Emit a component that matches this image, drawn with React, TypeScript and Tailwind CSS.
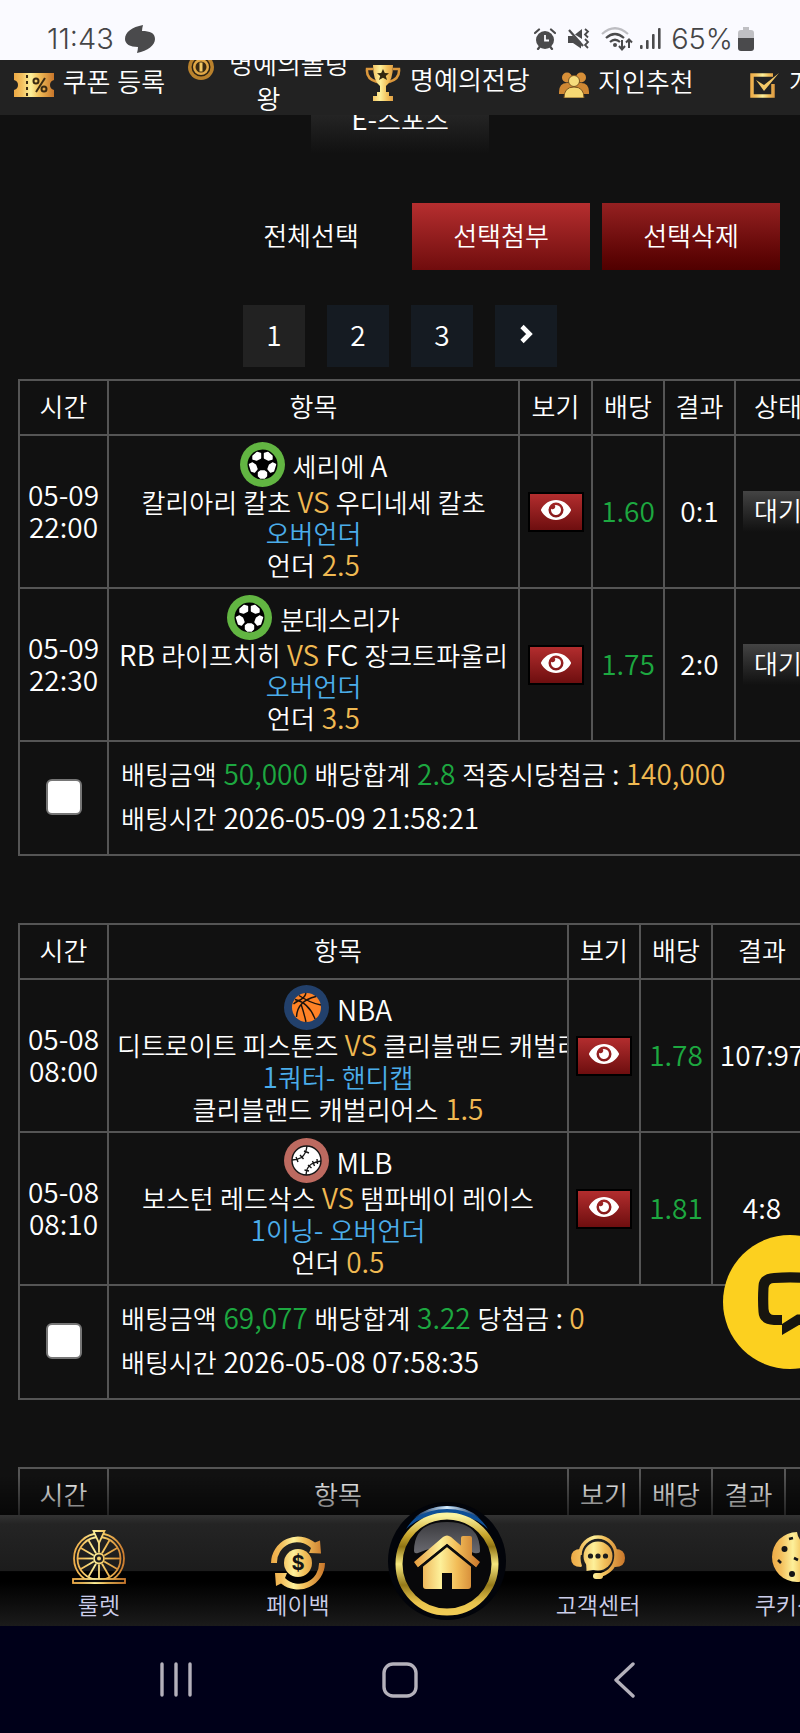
import type { ReactNode } from "react";
import { FaEye } from "react-icons/fa";

function Gold({ id, w }: { id: string; w: number }) {
  return (
    <defs>
      <linearGradient id={id} gradientUnits="userSpaceOnUse" x1="0" y1="0" x2={w} y2="0">
        <stop offset="0" stopColor="#eda945" />
        <stop offset="0.2" stopColor="#f3c05e" />
        <stop offset="0.42" stopColor="#fdf09a" />
        <stop offset="0.62" stopColor="#f2c05a" />
        <stop offset="1" stopColor="#c8752a" />
      </linearGradient>
    </defs>
  );
}

/* Latin letters and digits are set a step larger than the Hangul around them. */
function Mixed({ children }: { children: string }) {
  return (
    <>
      {children.split(/([\x20-\x7e]+)/).map((part, i) =>
        i % 2 === 1 ? (
          <span key={i} className="font-['Noto_Sans_CJK_KR',sans-serif] text-[28px] leading-none">{part}</span>
        ) : (
          part
        ),
      )}
    </>
  );
}

/* ---------- status bar ---------- */

function StatusBar() {
  return (
    <header className="flex h-[60px] shrink-0 items-center justify-between bg-[#fafaff] pt-[18px] pr-[46px] pl-[47px] font-['Inter',sans-serif] text-[29px] font-light text-[#454547]">
      <div className="flex items-center gap-[11px]">
        <span>11:43</span>
        <svg width="30" height="28" viewBox="0 0 30 28" fill="#4a4a4c" aria-hidden="true">
          <path d="M18 0 C7 2 0 7 0 14 C0 19 5 22 13 22 C13 24 12.500 26 12 28 C23 26 30 20 30 14 C30 8 25 6 17 6 C17 4 17.500 2 18 0 Z" />
        </svg>
      </div>
      <div className="flex items-center">
        <svg width="22" height="22" viewBox="0 0 22 22" aria-hidden="true">
          <circle cx="11" cy="12" r="9" fill="#4a4a4c" />
          <path d="M1 5 L5 1.500 M21 5 L17 1.500 M4 21 L6 18.500 M18 21 L16 18.500" stroke="#4a4a4c" strokeWidth="2.200" strokeLinecap="round" />
          <path d="M11 7 V12.500 H15" stroke="#fafaff" strokeWidth="1.800" fill="none" />
        </svg>
        <svg width="24" height="22" viewBox="0 0 24 22" className="ml-[11px]" aria-hidden="true">
          <path d="M1 8 H6 L14 14 V20.500 L6 15 H1 Z M8 6.500 L15 1 V11 Z" fill="#4a4a4c" />
          <path d="M2 2 L16 18" stroke="#4a4a4c" strokeWidth="2.200" />
          <path d="M18 1 l3 2.500 l-3 3 l3 3 M18 11 l3 3 l-3 3 l3 3" stroke="#4a4a4c" strokeWidth="1.800" fill="none" />
        </svg>
        <svg width="32" height="26" viewBox="0 0 32 26" className="ml-[10px]" fill="none" aria-hidden="true">
          <path d="M1 8 Q14 -3.500 27 8" stroke="#bdbdc2" strokeWidth="2.200" />
          <path d="M5 12 Q14 4 23 12 M9 16 Q14 11.500 19 16" stroke="#4a4a4c" strokeWidth="2.200" />
          <circle cx="14" cy="19" r="2" fill="#4a4a4c" />
          <path d="M21 14 V23 M18 20 L21 23.500 L24 20 M28 22 V14 M25 16.500 L28 13.500 L31 16.500" stroke="#4a4a4c" strokeWidth="2" />
        </svg>
        <svg width="22" height="22" viewBox="0 0 22 22" className="ml-[7px]" fill="#4a4a4c" aria-hidden="true">
          <rect x="0" y="17" width="2.600" height="4" rx="1" />
          <rect x="6" y="12" width="2.600" height="9" rx="1" />
          <rect x="12" y="6" width="2.600" height="15" rx="1" />
          <rect x="18" y="0" width="2.600" height="21" rx="1" />
        </svg>
        <span className="ml-[9px]">65%</span>
        <svg width="16" height="24" viewBox="0 0 16 24" className="ml-[5px]" aria-hidden="true">
          <path d="M5 0 H11 V3 H13 Q16 3 16 6 V11 H0 V6 Q0 3 3 3 H5 Z" fill="#bfbfc3" />
          <path d="M0 11 H16 V21 Q16 24 13 24 H3 Q0 24 0 21 Z" fill="#4a4a4c" />
        </svg>
      </div>
    </header>
  );
}

/* ---------- top menu ---------- */

const Ticket = () => (
  <svg width="40" height="24" viewBox="0 0 40 24" className="mr-[2px] inline-block align-middle" aria-hidden="true">
    <Gold id="g-ticket" w={40} />
    <path d="M0 0 H40 V7 Q36 8 36 12 Q36 16 40 17 V24 H0 V17 Q4 16 4 12 Q4 8 0 7 Z" fill="url(#g-ticket)" />
    <path d="M13 2 V23" stroke="#3a2a12" strokeWidth="2" strokeDasharray="3 3" />
    <path d="M31 5 L22 19" stroke="#3a2a12" strokeWidth="2" />
    <circle cx="22" cy="8" r="2.500" fill="none" stroke="#3a2a12" strokeWidth="2" />
    <circle cx="30" cy="16" r="2.500" fill="none" stroke="#3a2a12" strokeWidth="2" />
  </svg>
);

const Coin = () => (
  <svg width="26" height="26" viewBox="0 0 26 26" className="mr-[8px] inline-block align-middle" aria-hidden="true">
    <circle cx="13" cy="13" r="13" fill="#b9812c" />
    <circle cx="13" cy="13" r="9.500" fill="#2e2312" />
    <circle cx="13" cy="13" r="8" fill="#e2a846" />
    <circle cx="13" cy="13" r="5.500" fill="#3a2a12" />
    <rect x="11.500" y="8.500" width="3" height="9" fill="#f2c864" />
  </svg>
);

const Trophy = () => (
  <svg width="36" height="36" viewBox="0 0 36 36" className="mr-[2px] inline-block align-middle" aria-hidden="true">
    <Gold id="g-trophy" w={36} />
    <path d="M8 4 H2 Q1 14 12 17 M28 4 H34 Q35 14 24 17" fill="none" stroke="#dc983c" strokeWidth="2.500" />
    <path d="M8 0 H28 Q28 16 21 21 V27 H15 V21 Q8 16 8 0 Z" fill="url(#g-trophy)" />
    <path d="M12 27 H24 V31 H28 V36 H8 V31 H12 Z" fill="url(#g-trophy)" />
    <path d="M18 4 L19.800 8 L24 8.300 L20.800 11 L22 15 L18 12.800 L14 15 L15.200 11 L12 8.300 L16.200 8 Z" fill="#33270f" />
  </svg>
);

const People = () => (
  <svg width="30" height="26" viewBox="0 0 30 26" className="mr-[2px] inline-block align-middle" aria-hidden="true">
    <Gold id="g-people" w={30} />
    <circle cx="8" cy="5.500" r="5" fill="#d78f38" />
    <circle cx="22" cy="5.500" r="5" fill="#d78f38" />
    <path d="M0 20 Q0 11 8 11 H22 Q30 11 30 20 V22 H0 Z" fill="#cf8733" />
    <circle cx="15" cy="9" r="5.500" fill="#f6dc7c" stroke="#7a5420" strokeWidth="1" />
    <path d="M5 26 Q5 15 15 15 Q25 15 25 26 Z" fill="#f6d873" stroke="#7a5420" strokeWidth="1" />
  </svg>
);

const CheckBoxIcon = () => (
  <svg width="30" height="26" viewBox="0 0 30 26" className="mr-[2px] inline-block align-middle" fill="none" aria-hidden="true">
    <Gold id="g-check" w={30} />
    <path d="M23 3 H2 V24 H23 V12" stroke="url(#g-check)" strokeWidth="3.500" />
    <path d="M6 8 L14 19 L29 1 L14 13 Z" fill="#f3c868" />
  </svg>
);

const topMenu: { label: string; icon: ReactNode }[] = [
  { label: "쿠폰 등록", icon: <Ticket /> },
  { label: "명예의롤링왕", icon: <Coin /> },
  { label: "명예의전당", icon: <Trophy /> },
  { label: "지인추천", icon: <People /> },
  { label: "개근상", icon: <CheckBoxIcon /> },
];

function TopMenu() {
  return (
    <nav className="flex h-[55px] shrink-0 items-center overflow-hidden bg-[#222] pb-[11px] text-center leading-[35px]">
      {topMenu.map((m) => (
        <a key={m.label} href="#" className="w-[179px] shrink-0 px-[5px]">
          {m.icon} {m.label}
        </a>
      ))}
    </nav>
  );
}

/* ---------- sport badges ---------- */

const Soccer = () => (
  <svg width="45" height="45" viewBox="0 0 45 45" className="shrink-0" aria-hidden="true">
    <circle cx="22.500" cy="22.500" r="22.500" fill="#62b542" />
    <circle cx="22.500" cy="22.500" r="15" fill="#000" />
    <g fill="#fff" stroke="#fff" strokeWidth="1.400" strokeLinejoin="round">
      <path d="M13 14 L17 10.500 L20.500 11.500 L20.500 16 L16.500 18 L13 17 Z" />
      <path d="M32 14 L28 10.500 L24.500 11.500 L24.500 16 L28.500 18 L32 17 Z" />
      <path d="M9.500 22.500 L12.500 21 L15.500 23 L17 27 L14.500 30 L11.500 29 Z" />
      <path d="M35.500 22.500 L32.500 21 L29.500 23 L28 27 L30.500 30 L33.500 29 Z" />
      <path d="M18.500 30.500 L20.500 29 H24.500 L26.500 30.500 V34 L24.500 36 H20.500 L18.500 34 Z" />
    </g>
  </svg>
);

const Basketball = () => (
  <svg width="45" height="45" viewBox="0 0 45 45" className="shrink-0" aria-hidden="true">
    <circle cx="22.500" cy="22.500" r="22.500" fill="#22406b" />
    <circle cx="22.500" cy="22.500" r="14.500" fill="#ff8226" />
    <path
      d="M22 8 Q21 13 14 16 Q11 17.500 9.500 19 M15 10.500 Q26 18 37 20 M11 14.500 Q25 18 31 34 M32 11.500 Q13 16 12.500 32 M17 19 Q20 28 22 37"
      fill="none" stroke="#1a120c" strokeWidth="1.400"
    />
  </svg>
);

const Baseball = () => (
  <svg width="45" height="45" viewBox="0 0 45 45" className="shrink-0" aria-hidden="true">
    <circle cx="22.500" cy="22.500" r="22.500" fill="#bd6a60" />
    <circle cx="22.500" cy="22.500" r="14.500" fill="#fff" stroke="#151515" strokeWidth="1.400" />
    <path
      d="M8 22 Q13 22 17.500 19.500 Q22 16 23 8 M37 23 Q31 24 27.500 26 Q22.500 29 22 37 M12 19 l2 5 M16 17 l3.500 4 M20 13 l5 2 M33 21 l0.500 5 M28.500 23 l2 5 M24 27 l3.500 3 M20.500 32 l4.500 1"
      fill="none" stroke="#151515" strokeWidth="1.400"
    />
  </svg>
);

/* ---------- bet tables ---------- */

type Game = {
  date: string;
  time: string;
  badge: ReactNode;
  league: string;
  home: string;
  away: string;
  market: string;
  pick: string;
  line: string;
  odds: string;
  score: string;
};

type Slip = {
  id: string;
  cols: string[];
  games: Game[];
  stake?: string;
  total?: string;
  winLabel?: string;
  win?: string;
  placed?: string;
};

const slips: Slip[] = [
  {
    id: "slip-1",
    cols: ["w-[89px]", "w-[411px]", "w-[73px]", "w-[72px]", "w-[71px]", "w-[86px]"],
    games: [
      { date: "05-09", time: "22:00", badge: <Soccer />, league: "세리에 A", home: "칼리아리 칼초", away: "우디네세 칼초", market: "오버언더", pick: "언더", line: "2.5", odds: "1.60", score: "0:1" },
      { date: "05-09", time: "22:30", badge: <Soccer />, league: "분데스리가", home: "RB 라이프치히", away: "FC 장크트파울리", market: "오버언더", pick: "언더", line: "3.5", odds: "1.75", score: "2:0" },
    ],
    stake: "50,000", total: "2.8", winLabel: "적중시당첨금", win: "140,000", placed: "2026-05-09 21:58:21",
  },
  {
    id: "slip-2",
    cols: ["w-[89px]", "w-[460px]", "w-[72px]", "w-[72px]", "w-[100px]", "w-[86px]"],
    games: [
      { date: "05-08", time: "08:00", badge: <Basketball />, league: "NBA", home: "디트로이트 피스톤즈", away: "클리블랜드 캐벌리어스", market: "1쿼터- 핸디캡", pick: "클리블랜드 캐벌리어스", line: "1.5", odds: "1.78", score: "107:97" },
      { date: "05-08", time: "08:10", badge: <Baseball />, league: "MLB", home: "보스턴 레드삭스", away: "탬파베이 레이스", market: "1이닝- 오버언더", pick: "언더", line: "0.5", odds: "1.81", score: "4:8" },
    ],
    stake: "69,077", total: "3.22", winLabel: "당첨금", win: "0", placed: "2026-05-08 07:58:35",
  },
  {
    id: "slip-3",
    cols: ["w-[89px]", "w-[460px]", "w-[72px]", "w-[72px]", "w-[73px]", "w-[86px]"],
    games: [],
  },
];

const headings = ["시간", "항목", "보기", "배당", "결과", "상태"];

function SlipTable({ slip }: { slip: Slip }) {
  return (
    <table className="mb-[67px] w-0 table-fixed border-collapse text-center leading-[31px] whitespace-nowrap [&_td]:border-2 [&_td]:border-[#555] [&_td]:p-0 [&_th]:border-2 [&_th]:border-[#555] [&_th]:p-0">
      <colgroup>
        {slip.cols.map((c, i) => (
          <col key={i} className={c} />
        ))}
      </colgroup>
      <thead>
        <tr className="h-[55px]">
          {headings.map((h) => (
            <th key={h} className="font-[350]">{h}</th>
          ))}
        </tr>
      </thead>
      <tbody>
        {slip.games.map((g) => (
          <tr key={g.time} className="h-[153px]">
            <td>
              <Mixed>{g.date}</Mixed>
              <br />
              <Mixed>{g.time}</Mixed>
            </td>
            <td>
              <div className="overflow-hidden px-[8px]">
                <div className="flex h-[45px] items-center justify-center gap-[8px]">
                  {g.badge}
                  <span className="pt-[6px]"><Mixed>{g.league}</Mixed></span>
                </div>
                <div>
                  <Mixed>{`${g.home} `}</Mixed>
                  <span className="text-[#f0b952]"><Mixed>VS</Mixed></span>
                  <Mixed>{` ${g.away}`}</Mixed>
                </div>
                <div className="text-[#4badea]"><Mixed>{g.market}</Mixed></div>
                <div>
                  {g.pick} <span className="text-[#f0b952]"><Mixed>{g.line}</Mixed></span>
                </div>
              </div>
            </td>
            <td>
              <button type="button" aria-label="보기" className="inline-flex h-[40px] w-[56px] justify-center border-2 border-black bg-linear-to-b from-[#b32d2e] to-[#6e0e0f] pt-[1px] align-middle">
                <FaEye size={30} />
              </button>
            </td>
            <td className="text-[#1da840]"><Mixed>{g.odds}</Mixed></td>
            <td><Mixed>{g.score}</Mixed></td>
            <td>
              <button type="button" className="h-[41px] w-[70px] bg-linear-to-b from-[#444] to-[#111] align-middle">대기</button>
            </td>
          </tr>
        ))}
        {slip.placed && (
          <tr className="h-[114px]">
            <td>
              <input
                id={slip.id}
                type="checkbox"
                className="mx-auto mb-[3px] block size-[36px] appearance-none rounded-[6px] border-2 border-[#767676] bg-white"
              />
            </td>
            <td colSpan={5} className="text-left leading-[44px]">
              <label htmlFor={slip.id} className="block px-[12px] pb-[3px]">
                배팅금액 <span className="text-[#1da840]"><Mixed>{slip.stake ?? ""}</Mixed></span> 배당합계{" "}
                <span className="text-[#1da840]"><Mixed>{slip.total ?? ""}</Mixed></span> {slip.winLabel}
                <Mixed>{" : "}</Mixed>
                <span className="text-[#f0b952]"><Mixed>{slip.win ?? ""}</Mixed></span>
                <br />
                배팅시간 <Mixed>{slip.placed}</Mixed>
              </label>
            </td>
          </tr>
        )}
      </tbody>
    </table>
  );
}

/* ---------- bottom bar ---------- */

const WHEEL = Array.from({ length: 12 }, (_, i) => (i * Math.PI) / 6);

const Wheel = () => (
  <svg width="54" height="54" viewBox="0 0 54 54" fill="none" aria-hidden="true">
    <Gold id="g-wheel" w={54} />
    <g stroke="url(#g-wheel)" strokeWidth="1.800">
      <circle cx="27" cy="28.500" r="25" />
      <circle cx="27" cy="28.500" r="21.500" />
      <circle cx="27" cy="28.500" r="5" />
      {WHEEL.map((a) => (
        <path key={a} d={`M${27 + 6 * Math.cos(a)} ${28.5 + 6 * Math.sin(a)} L${27 + 21 * Math.cos(a)} ${28.5 + 21 * Math.sin(a)}`} />
      ))}
      <path d="M21.500 1 H32.500 L27 13 Z" fill="#1f1f1f" />
      <rect x="1" y="49" width="52" height="4" fill="#0a0a0a" />
    </g>
    <circle cx="27" cy="28.500" r="2" fill="#f3d573" />
  </svg>
);

const Payback = () => (
  <svg width="54" height="54" viewBox="0 0 54 54" className="mt-[12px]" aria-hidden="true">
    <Gold id="g-pay" w={54} />
    <g fill="url(#g-pay)">
      <path d="M0 27 A27 27 0 0 1 44 6.500 L49 4.500 L50 17.500 L38 17 L40 12 A20 20 0 0 0 6 27 Z" />
      <path d="M54 27 A27 27 0 0 1 10 47.500 L5 50 L4 37 L16 37 L14 42 A20 20 0 0 0 48 27 Z" />
      <circle cx="27" cy="27" r="14" />
    </g>
    <text x="27" y="34" textAnchor="middle" fontSize="20" fontWeight="700" fill="#151515" className="font-['Inter',sans-serif]">$</text>
  </svg>
);

const Headset = () => (
  <svg width="54" height="46" viewBox="0 0 54 46" aria-hidden="true">
    <Gold id="g-head" w={54} />
    <path d="M9 21 A18 18 0 0 1 45 21 Q45 36 30 41" fill="none" stroke="url(#g-head)" strokeWidth="3.500" />
    <g fill="url(#g-head)">
      <path d="M10 15 Q0 15 0 24 Q0 33 10 33 L11 32 Q8 24 11 16 Z" />
      <path d="M44 15 Q54 15 54 24 Q54 33 44 33 L43 32 Q46 24 43 16 Z" />
      <circle cx="27" cy="22" r="14.500" />
      <path d="M15 26 L15.500 37 L28 35 Z" />
      <rect x="22" y="39" width="10" height="6" rx="3" />
    </g>
    <g fill="#1c1c1c">
      <circle cx="19.500" cy="22" r="2.600" />
      <circle cx="27" cy="22" r="2.600" />
      <circle cx="34.500" cy="22" r="2.600" />
    </g>
  </svg>
);

const Cookie = () => (
  <svg width="52" height="52" viewBox="0 0 52 52" aria-hidden="true">
    <Gold id="g-cookie" w={52} />
    <path d="M26 1 Q27 9 33 12 Q35 20 43 20 Q46 25 51 26 A25 25 0 1 1 26 1 Z" fill="url(#g-cookie)" />
    <g fill="#141414">
      <circle cx="13.500" cy="18" r="3" />
      <circle cx="21" cy="43" r="3" />
      <circle cx="36" cy="34" r="3" />
    </g>
    <path d="M18 8 l4 -1 M7 29 l3 3 M23 27 l4 2" stroke="#141414" strokeWidth="2.600" />
  </svg>
);

const HomeBadge = () => (
  <svg width="118" height="118" viewBox="0 0 118 118" aria-hidden="true">
    <defs>
      <linearGradient id="g-house" gradientUnits="userSpaceOnUse" x1="26" y1="0" x2="92" y2="0">
        <stop offset="0" stopColor="#e79c3d" />
        <stop offset="0.4" stopColor="#fdf09a" />
        <stop offset="0.65" stopColor="#f2bd58" />
        <stop offset="1" stopColor="#c8752a" />
      </linearGradient>
      <linearGradient id="g-ring" x1="0" y1="0" x2="0" y2="1">
        <stop offset="0" stopColor="#fbf3a0" />
        <stop offset="0.2" stopColor="#c9a62c" />
        <stop offset="0.32" stopColor="#8f7414" />
        <stop offset="0.5" stopColor="#f6e87e" />
        <stop offset="0.72" stopColor="#94791a" />
        <stop offset="0.9" stopColor="#e8c34c" />
        <stop offset="1" stopColor="#f0cb55" />
      </linearGradient>
      <linearGradient id="g-gloss" x1="0" y1="0" x2="0" y2="1">
        <stop offset="0" stopColor="#3a3a3e" />
        <stop offset="1" stopColor="#6a6a70" />
      </linearGradient>
      <linearGradient id="g-blue" x1="0" y1="0" x2="1" y2="0">
        <stop offset="0" stopColor="#0a2c5c" />
        <stop offset="0.5" stopColor="#d6ecfb" />
        <stop offset="1" stopColor="#0a2c5c" />
      </linearGradient>
    </defs>
    <circle cx="59" cy="59" r="59" fill="#02040a" />
    <path d="M18 27 Q32 5 59 4 Q86 5 100 27 Q84 12 59 12 Q34 12 18 27 Z" fill="#0e4f96" />
    <path d="M26 16 Q40 4 59 4 Q78 4 92 16 Q76 7 59 7 Q42 7 26 16 Z" fill="url(#g-blue)" />
    <circle cx="59" cy="62" r="48" fill="#08080a" stroke="url(#g-ring)" strokeWidth="7" />
    <path d="M26 49 Q26 20 59 20 Q92 20 92 49 Q92 52 86 51 Q59 38 30 51 Q26 52 26 49 Z" fill="url(#g-gloss)" />
    <g fill="url(#g-house)">
      <path d="M73 36 Q73 34 75 34 H82 Q84 34 84 36 V58 L73 48 Z" />
      <path d="M35 62 L59 43 L83 62 V84 Q83 87 80 87 H64 V71 H54 V87 H38 Q35 87 35 84 Z" />
      <path d="M26 60 L55 35 Q59 32 63 35 L92 60 L88 65.500 L59 42 L30 65.500 Z" />
    </g>
    <path d="M30 67 L59 43.500 L88 67" fill="none" stroke="#0b0b0d" strokeWidth="2.600" />
  </svg>
);

const TabLink = ({ icon, label, wide }: { icon: ReactNode; label: string; wide?: boolean }) => (
  <a href="#" className={wide ? "flex w-[200px] shrink-0 flex-col items-center" : "flex w-[198px] shrink-0 flex-col items-center"}>
    <span className="flex h-[80px] items-center pt-[4px]">{icon}</span>
    <span className="leading-[20px]">{label}</span>
  </a>
);

function BottomBar() {
  return (
    <nav className="relative h-[111px] shrink-0 bg-[linear-gradient(to_bottom,#333_0%,#242424_8%,#1c1c1c_50%,#000_51%,#000_60%,#1b1b1b_100%)] text-[23px] text-[#ccceea]">
      <div className="pointer-events-none absolute inset-x-0 bottom-full h-[40px] bg-linear-to-b from-transparent to-black/60" />
      <div className="pointer-events-none absolute bottom-full left-[378px] h-[40px] w-[140px] bg-[radial-gradient(closest-side_at_50%_100%,rgba(24,70,150,0.75),transparent)]" />
      <div className="flex h-full overflow-hidden whitespace-nowrap">
        <TabLink icon={<Wheel />} label="룰렛" />
        <TabLink icon={<Payback />} label="페이백" wide />
        <div className="w-[100px] shrink-0" />
        <TabLink icon={<Headset />} label="고객센터" wide />
        <TabLink icon={<Cookie />} label="쿠키상점" />
      </div>
      <a href="#" aria-label="홈" className="absolute top-[-13px] left-[388px]">
        <HomeBadge />
      </a>
    </nav>
  );
}

function SystemBar() {
  return (
    <footer className="flex h-[107px] shrink-0 items-center justify-center gap-[188px] bg-[#000019] text-[#b4b1bb]">
      <button type="button" aria-label="최근 앱" className="block">
        <svg width="36" height="36" viewBox="0 0 36 36" stroke="currentColor" strokeWidth="3.400" strokeLinecap="round">
          <path d="M4 2 V33 M18 2 V33 M32 2 V33" />
        </svg>
      </button>
      <button type="button" aria-label="홈 화면" className="block">
        <svg width="36" height="36" viewBox="0 0 36 36" fill="none" stroke="currentColor" strokeWidth="3.400">
          <rect x="2" y="2" width="32" height="32" rx="9" />
        </svg>
      </button>
      <button type="button" aria-label="뒤로" className="block">
        <svg width="36" height="36" viewBox="0 0 36 36" fill="none" stroke="currentColor" strokeWidth="3.400" strokeLinecap="round" strokeLinejoin="round">
          <path d="M27 2 L10 18 L27 34" />
        </svg>
      </button>
    </footer>
  );
}

export default function App() {
  return (
    <div className="flex h-screen flex-col overflow-hidden bg-[#111] font-['Noto_Sans','Noto_Sans_CJK_KR',sans-serif] text-[26px] font-[350] text-white">
      <StatusBar />
      <TopMenu />
      <main className="relative min-h-0 flex-1 overflow-hidden">
        <button type="button" className="mx-auto -mt-[28px] block h-[66px] w-[178px] bg-linear-to-b from-[#333] to-[#111]">
          <Mixed>E-스포츠</Mixed>
        </button>
        <div className="mt-[50px] mr-[20px] flex justify-end gap-[12px]">
          <button type="button" className="h-[67px] w-[178px]">전체선택</button>
          <button type="button" className="h-[67px] w-[178px] bg-linear-to-b from-[#b62e2f] to-[#700c0d]">선택첨부</button>
          <button type="button" className="h-[67px] w-[178px] bg-linear-to-b from-[#952021] to-[#500000]">선택삭제</button>
        </div>
        <div className="mt-[35px] flex justify-center gap-[22px]">
          <button type="button" className="size-[62px] bg-[#222]"><Mixed>1</Mixed></button>
          <button type="button" className="size-[62px] bg-[#151b22]"><Mixed>2</Mixed></button>
          <button type="button" className="size-[62px] bg-[#151b22]"><Mixed>3</Mixed></button>
          <button type="button" aria-label="다음" className="flex size-[62px] items-center justify-center bg-[#151b22] pb-[4px]">
            <svg width="14" height="20" viewBox="0 0 14 20" fill="none" stroke="currentColor" strokeWidth="4.600" aria-hidden="true">
              <path d="M3 2.500 L10.500 10 L3 17.500" />
            </svg>
          </button>
        </div>
        <div className="mt-[12px] pl-[18px]">
          {slips.map((s) => (
            <SlipTable key={s.id} slip={s} />
          ))}
        </div>
        <button type="button" aria-label="상담" className="absolute right-[-57px] bottom-[146px] flex size-[134px] items-center justify-center rounded-full bg-[#fcd01f]">
          <svg width="66" height="66" viewBox="0 0 66 66" fill="#17150f" aria-hidden="true">
            <path
              fillRule="evenodd"
              d="M17 4 Q33 2.500 49 4 Q64 5 64.500 17 Q65.500 30 64.500 43 Q64 55 50 56 H42 L25 66 V56 H17 Q2 55 1.500 43 Q0.500 30 1.500 17 Q2 5 17 4 Z M17 14 Q12 14 11.500 19 Q11 30 11.500 40 Q12 46 17 46 H25 V55 L40 45.500 H49 Q54 45.500 54.500 40 Q55 30 54.500 19 Q54 14 49 14 Q33 13 17 14 Z"
            />
          </svg>
        </button>
      </main>
      <BottomBar />
      <SystemBar />
    </div>
  );
}
